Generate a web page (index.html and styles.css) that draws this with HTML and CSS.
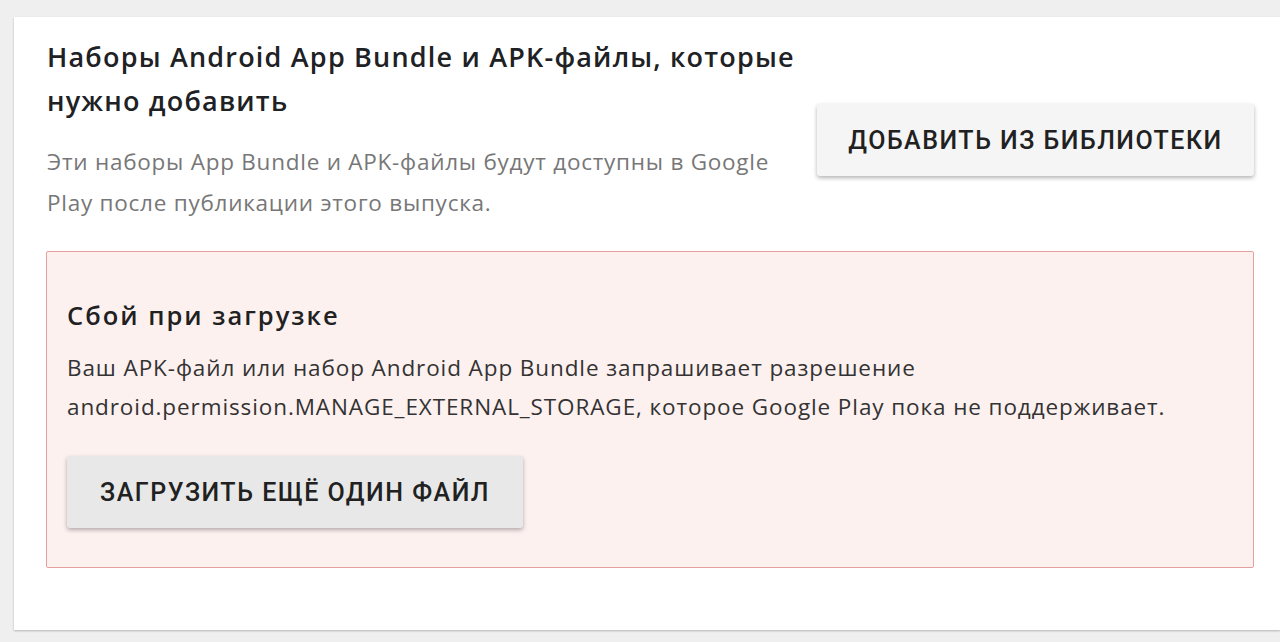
FILE: index.html
```html
<!DOCTYPE html>
<html lang="ru">
<head>
<meta charset="utf-8">
<link rel="stylesheet" href="styles.css">
</head>
<body>
<div class="page">
  <section class="card">
    <div class="header">
      <div class="intro">
        <h2 class="title">Наборы Android App Bundle и APK-файлы, которые нужно добавить</h2>
        <p class="desc">Эти наборы App Bundle и APK-файлы будут доступны в Google Play после публикации этого выпуска.</p>
      </div>
      <button class="btn btn-light">ДОБАВИТЬ ИЗ БИБЛИОТЕКИ</button>
    </div>
    <div class="error">
      <h3 class="error-title">Сбой при загрузке</h3>
      <p class="error-text">Ваш APK-файл или набор Android App Bundle запрашивает разрешение android.permission.MANAGE_EXTERNAL_STORAGE, которое Google Play пока не поддерживает.</p>
      <button class="btn btn-grey">ЗАГРУЗИТЬ ЕЩЁ ОДИН ФАЙЛ</button>
    </div>
  </section>
</div>
</body>
</html>
```
FILE: styles.css
```css
html, body {
  margin: 0;
  padding: 0;
  background: #efefef;
  height: 100%;
  overflow: hidden;
}
.page {
  padding: 17px 0 0 14px;
}
.card {
  background: #fff;
  box-shadow: 0 1px 2px rgba(0,0,0,0.25);
  padding: 18px 26px 62px 32px;
  font-family: "Open Sans", "Noto Sans", sans-serif;
}
.header {
  display: flex;
  justify-content: space-between;
  align-items: flex-start;
}
.intro {
  width: 760px;
  padding-left: 1px;
}
.title {
  margin: 0;
  font-size: 27px;
  line-height: 44px;
  font-weight: 600;
  letter-spacing: 1.2px;
  color: #202124;
}
.desc {
  margin: 18px 0 0;
  font-size: 22.5px;
  line-height: 41px;
  letter-spacing: 0.75px;
  color: #777;
}
.btn {
  font-family: Roboto, "Liberation Sans", sans-serif;
  font-weight: 500;
  font-size: 25px;
  letter-spacing: 1.5px;
  color: #212121;
  border: none;
  border-radius: 3px;
  height: 72px;
  box-shadow: 0 2px 4px rgba(0,0,0,0.3);
  cursor: pointer;
  padding: 0;
}
.btn-light {
  background: #f5f5f5;
  width: 437px;
  margin-top: 69px;
}
.btn-grey {
  background: #e8e8e8;
  width: 456px;
  margin-top: 30px;
}
.error {
  margin-top: 28px;
  border: 1.5px solid #e5a0a0;
  border-radius: 2px;
  background: #fdf1f0;
  padding: 45px 20px 39px 20px;
}
.error-title {
  margin: 0;
  font-size: 25.5px;
  line-height: 36px;
  font-weight: 600;
  letter-spacing: 2px;
  color: #212121;
}
.error-text {
  margin: 15px 0 0;
  font-size: 22.5px;
  line-height: 39px;
  letter-spacing: 0.9px;
  color: #333;
}
```
